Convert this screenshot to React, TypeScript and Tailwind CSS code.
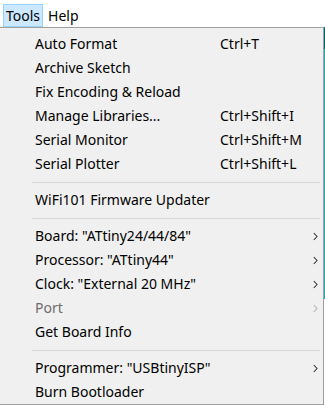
import React from 'react';

type Item =
  | { sep: true }
  | { sep?: false; label: string; shortcut?: string; sub?: boolean; disabled?: boolean };

const items: Item[] = [
  { label: 'Auto Format', shortcut: 'Ctrl+T' },
  { label: 'Archive Sketch' },
  { label: 'Fix Encoding & Reload' },
  { label: 'Manage Libraries...', shortcut: 'Ctrl+Shift+I' },
  { label: 'Serial Monitor', shortcut: 'Ctrl+Shift+M' },
  { label: 'Serial Plotter', shortcut: 'Ctrl+Shift+L' },
  { sep: true },
  { label: 'WiFi101 Firmware Updater' },
  { sep: true },
  { label: 'Board: "ATtiny24/44/84"', sub: true },
  { label: 'Processor: "ATtiny44"', sub: true },
  { label: 'Clock: "External 20 MHz"', sub: true },
  { label: 'Port', sub: true, disabled: true },
  { label: 'Get Board Info' },
  { sep: true },
  { label: 'Programmer: "USBtinyISP"', sub: true },
  { label: 'Burn Bootloader' },
];

function Chevron({ disabled }: { disabled?: boolean }) {
  return (
    <svg width="5" height="9" viewBox="0 0 5 9" className={disabled ? 'text-[#b5b5b5]' : 'text-[#333333]'}>
      <polyline points="0.8,1 4,4.5 0.8,8" fill="none" stroke="currentColor" strokeWidth="1.1" />
    </svg>
  );
}

export default function App() {
  return (
    <div className="w-[325px] h-[408px] bg-white overflow-hidden text-[14px] text-black font-['Noto_Sans',sans-serif] leading-none">
      {/* menu bar */}
      <div className="h-[27px] flex items-start">
        <div className="ml-[3px] mt-[4px] h-[23px] px-[2px] flex items-center border border-[#99d1ff] bg-[#cce8ff]">Tools</div>
        <div className="ml-[4px] mt-[4px] h-[23px] px-[1px] flex items-center">Help</div>
      </div>

      <div className="flex">
        <div className="w-[324px] bg-[#f0f0f0] border-t border-r border-b border-[#a0a0a0] pt-[4px]">
          {items.map((it, i) =>
            it.sep ? (
              <div key={i} className="h-[12px] flex items-center">
                <div className="ml-[32px] mr-[3px] flex-1 h-px bg-[#d7d7d7]" />
              </div>
            ) : (
              <div key={i} className={`h-[24px] flex items-center ${it.disabled ? 'text-[#6d6d6d]' : ''}`}>
                <span className="pl-[35px] w-[220px] whitespace-nowrap">{it.label}</span>
                <span className="flex-1 whitespace-nowrap">{it.shortcut}</span>
                <span className="w-[10px] flex items-center">{it.sub && <Chevron disabled={it.disabled} />}</span>
              </div>
            )
          )}
        </div>
        <div className="flex-1 flex flex-col">
          <div className="h-[22px] bg-[#00656b]" />
          <div className="h-[250px] bg-[#2aa6ad]" />
          <div className="flex-1 bg-white" />
        </div>
      </div>
    </div>
  );
}
